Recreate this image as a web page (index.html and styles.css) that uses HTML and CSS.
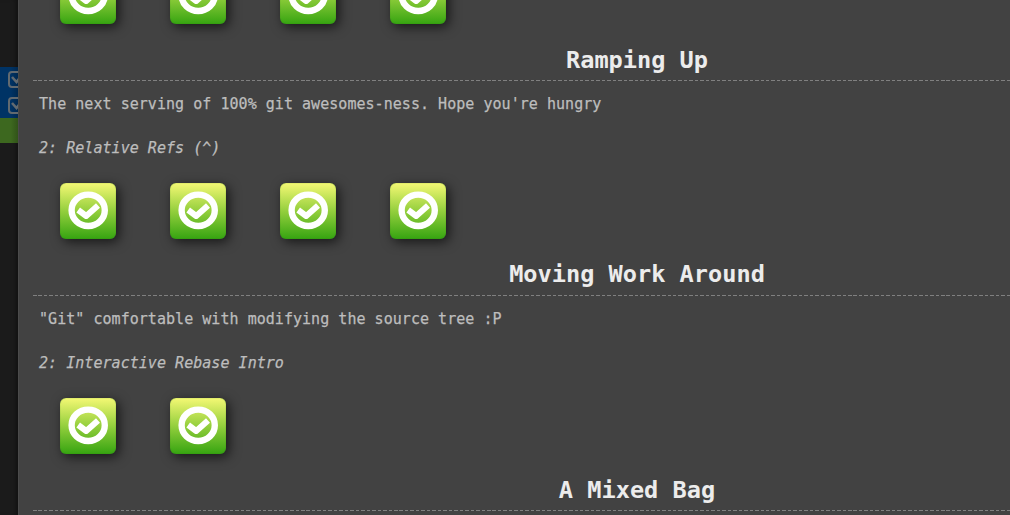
FILE: index.html
```html
<!DOCTYPE html>
<html lang="en">
<head>
<meta charset="utf-8">
<title>Levels</title>
<link rel="stylesheet" href="styles.css">
</head>
<body>
<svg class="symbols" width="0" height="0">
  <symbol id="done" viewBox="0 0 56 56">
    <ellipse cx="28.2" cy="27.3" rx="16.6" ry="15.7" fill="none" stroke="#fff" stroke-width="6.4"/>
    <path d="M18.2 27L26.2 33L38 22.5" fill="none" stroke="#fff" stroke-width="6" stroke-linejoin="round"/>
  </symbol>
  <symbol id="box" viewBox="0 0 17 17">
    <rect x="1" y="1" width="15" height="15" rx="3" fill="none" stroke="#626a70" stroke-width="2"/>
    <path d="M4 6L8.5 11L15 3" fill="none" stroke="#626a70" stroke-width="2.6"/>
  </symbol>
</svg>
<div class="app">
  <aside class="history">
    <div class="command"><svg class="tick"><use href="#box"/></svg></div>
    <div class="command"><svg class="tick"><use href="#box"/></svg></div>
    <div class="prompt"></div>
  </aside>
  <main class="panel">
    <section class="series">
      <div class="levels">
        <svg class="level"><use href="#done"/></svg>
        <svg class="level"><use href="#done"/></svg>
        <svg class="level"><use href="#done"/></svg>
        <svg class="level"><use href="#done"/></svg>
      </div>
    </section>
    <section class="series">
      <h2 class="title">Ramping Up</h2>
      <div class="rule"></div>
      <p class="about">The next serving of 100% git awesomes-ness. Hope you're hungry</p>
      <p class="current">2: Relative Refs (^)</p>
      <div class="levels">
        <svg class="level"><use href="#done"/></svg>
        <svg class="level"><use href="#done"/></svg>
        <svg class="level"><use href="#done"/></svg>
        <svg class="level"><use href="#done"/></svg>
      </div>
    </section>
    <section class="series">
      <h2 class="title title-raised">Moving Work Around</h2>
      <div class="rule"></div>
      <p class="about">"Git" comfortable with modifying the source tree :P</p>
      <p class="current">2: Interactive Rebase Intro</p>
      <div class="levels">
        <svg class="level"><use href="#done"/></svg>
        <svg class="level"><use href="#done"/></svg>
      </div>
    </section>
    <section class="series">
      <h2 class="title">A Mixed Bag</h2>
      <div class="rule"></div>
    </section>
  </main>
</div>
</body>
</html>
```
FILE: styles.css
```css
* { box-sizing: border-box; }
body {
  margin: 0;
  overflow: hidden;
  background: #424242;
  font-family: Consolas, "DejaVu Sans Mono", monospace;
}
.symbols { display: none; }
.app { display: flex; height: 515px; overflow: hidden; }
.history {
  flex: none;
  width: 18px;
  padding-top: 67px;
  background: #1b1b1b;
  box-shadow: inset -5px 0 5px -3px rgba(0, 0, 0, .4);
}
.command {
  height: 25.5px;
  padding: 4px 0 0 8px;
  overflow: hidden;
  background: linear-gradient(90deg, #003365 60%, #00284f);
}
.tick { display: block; width: 17px; height: 17px; }
.prompt { height: 25px; background: linear-gradient(90deg, #3d681f 60%, #315319); }
.panel {
  flex: none;
  width: 1224px;
  margin-top: -32px;
  padding-left: 14px;
  border-left: 1px solid #4b4b4b;
  background: #424242;
}
.series { width: 1208px; }
.title {
  height: 56px;
  margin: 0;
  padding-top: 20px;
  font-size: 23.6px;
  line-height: 32px;
  font-weight: bold;
  text-align: center;
  color: #ececec;
}
.title-raised { padding-top: 19px; }
.rule {
  height: 1px;
  background: repeating-linear-gradient(90deg, #808080 0 3.5px, #424242 3.5px 5.47px);
}
.about, .current {
  margin: 0;
  padding-left: 6px;
  font-size: 15px;
  letter-spacing: .04px;
  line-height: 20px;
  color: #bdbdbd;
  -webkit-text-stroke: .25px #bdbdbd;
  white-space: pre;
}
.about { padding-top: 13px; height: 44px; }
.current { padding-top: 13px; height: 58px; font-style: italic; }
.levels { display: flex; gap: 54px; padding-left: 27px; }
.level {
  width: 56px;
  height: 56px;
  border-radius: 6px;
  background: linear-gradient(#f4f874, #94cf3d 50%, #36a411);
  box-shadow: inset 0 0 1px rgba(30, 110, 20, .7), 3px 3px 12px rgba(0, 0, 0, .65);
}
```
